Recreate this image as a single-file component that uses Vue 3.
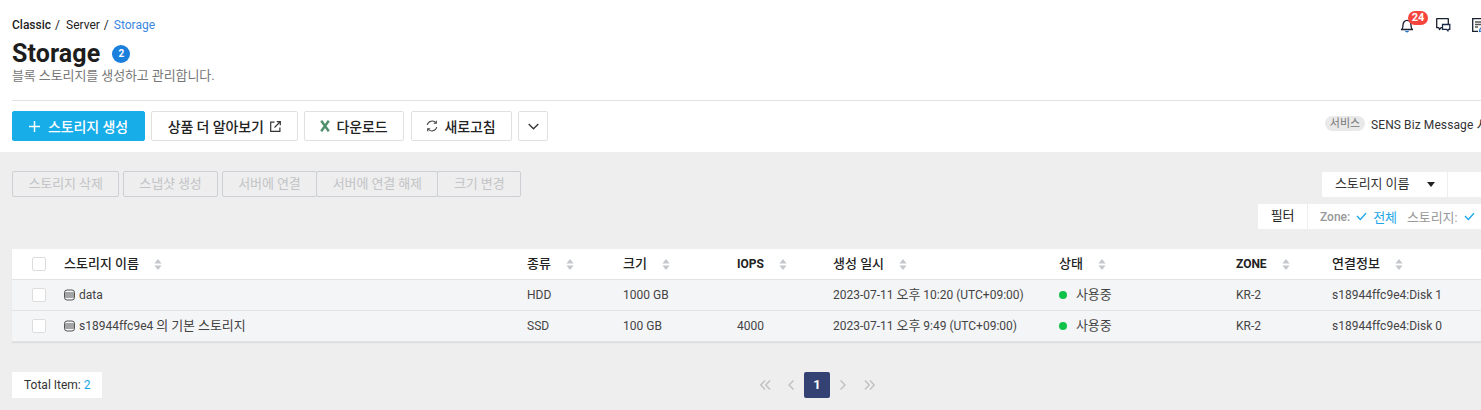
<script setup>
const headers = [
  { label: '스토리지 이름' }, { label: '종류' }, { label: '크기' }, { label: 'IOPS', latin: true },
  { label: '생성 일시' }, { label: '상태' }, { label: 'ZONE', latin: true }, { label: '연결정보' }
]
const rows = [
  { name: 'data', type: 'HDD', size: '1000 GB', iops: '', date: '2023-07-11 오후 10:20 (UTC+09:00)', zone: 'KR-2', link: 's18944ffc9e4:Disk 1' },
  { name: 's18944ffc9e4 의 기본 스토리지', type: 'SSD', size: '100 GB', iops: '4000', date: '2023-07-11 오후 9:49 (UTC+09:00)', zone: 'KR-2', link: 's18944ffc9e4:Disk 0' }
]
const actions = [
  { group: ['스토리지 삭제'] }, { group: ['스냅샷 생성'] }, { group: ['서버에 연결', '서버에 연결 해제', '크기 변경'] }
]
// Hangul is set a size larger than Latin in this UI, so mixed strings are split by script.
const split = (s) =>
  s.split(/([\uAC00-\uD7A3]+(?:\s[\uAC00-\uD7A3]+)*)/).filter(Boolean).map((t) => ({ t, ko: /[\uAC00-\uD7A3]/.test(t) }))
</script>

<template>
  <div class="page">
    <header class="top">
      <div class="crumb-row">
        <nav class="crumbs">
          <b>Classic</b><span class="sep">/</span><span>Server</span><span class="sep">/</span><span class="cur">Storage</span>
        </nav>
        <div class="top-icons">
          <span class="ic-bell">
            <svg width="16" height="16" viewBox="0 0 16 16" fill="none" stroke="#1a2230" stroke-width="1.3">
              <path d="M2.500 12.500c1.100-1 1.500-2 1.500-4.300C4 5.500 5.700 3.300 8 3.300s4 2.200 4 4.900c0 2.300.4 3.300 1.500 4.300z" stroke-linejoin="round"/>
              <path d="M6.500 13.800c.3.700.9 1 1.500 1s1.200-.3 1.500-1" stroke="#1a6fc4"/>
            </svg>
            <em class="count">24</em>
          </span>
          <svg class="ic-chat" width="16" height="16" viewBox="0 0 16 16" fill="none" stroke="#1a2230" stroke-width="1.3">
            <path d="M1.700 1.700h11.600v9H6l-1.500 1.800-.7-1.800H1.700z" stroke-linejoin="round"/>
            <path d="M7.500 7.500h7.300v4.800h-1.300l-.6 1.500-1.300-1.500h-4.100z" fill="#fff" stroke="#1a2a44"/>
          </svg>
          <svg class="ic-note" width="16" height="16" viewBox="0 0 16 16" fill="none" stroke="#1a2230" stroke-width="1.3">
            <path d="M14 7V1.700H1.700v12.600H7"/>
            <path d="M4 5h7.500M4 7.500h7M4 10h3" stroke="#555"/>
            <path d="M8.500 14.500l.5-2.500 4.500-4.500 2 2L11 14z" stroke="#1a6fc4" stroke-width="1.1"/>
          </svg>
        </div>
      </div>
      <h1 class="title">Storage <span class="badge">2</span></h1>
      <p class="sub ko">블록 스토리지를 생성하고 관리합니다.</p>
      <div class="toolbar">
        <button class="btn primary">
          <svg width="11" height="11" viewBox="0 0 11 11" stroke="#fff" stroke-width="1.500"><path d="M5.500 0v11M0 5.500h11"/></svg>
          <span>스토리지 생성</span>
        </button>
        <button class="btn w146">
          상품 더 알아보기
          <svg width="11" height="11" viewBox="0 0 11 11" fill="none" stroke="#333" stroke-width="1.200">
            <path d="M4.500 1.100H.7v9.200h9.200V6.500"/><path d="M4.500 6.500l5.800-5.800M6.800.7h3.500v3.500"/>
          </svg>
        </button>
        <button class="btn w100">
          <svg width="10" height="12" viewBox="0 0 10 12" fill="none" stroke="#4f8f6a" stroke-width="2.400"><path d="M1.200 .8l7.600 10.400M8.800 .8L1.200 11.200"/></svg>
          다운로드
        </button>
        <button class="btn w101">
          <svg width="12" height="12" viewBox="0 0 12 12" fill="none" stroke="#444" stroke-width="1.100">
            <path d="M1.200 5A5 5 0 0 1 10 3M10.800 7A5 5 0 0 1 2 9"/><path d="M10.300 .8V3.300H7.800M1.700 11.200V8.700h2.500"/>
          </svg>
          새로고침
        </button>
        <button class="btn w30">
          <svg width="11" height="7" viewBox="0 0 11 7" fill="none" stroke="#333" stroke-width="1.300"><path d="M.7 1l4.800 4.800L10.300 1"/></svg>
        </button>
        <div class="service"><span class="chip">서비스</span><span class="svc-text">SENS Biz Message <span class="ko">서비스 이용 안내</span></span></div>
      </div>
    </header>

    <main class="body">
      <div class="controls">
        <div class="actions">
          <div v-for="(a, i) in actions" :key="i" class="act-group">
            <span v-for="t in a.group" :key="t" class="act ko">{{ t }}</span>
          </div>
        </div>
        <div class="search">
          <div class="select ko">스토리지 이름<i class="tri"></i></div>
          <div class="search-input"></div>
        </div>
      </div>
      <div class="filters">
        <div class="f-label ko">필터</div>
        <div class="f-body">
          <span class="k">Zone:</span>
          <svg width="11" height="9" viewBox="0 0 11 9" fill="none" stroke="#1ba6e8" stroke-width="1.300"><path d="M1 4l3.300 3.500L10 1.200"/></svg>
          <span class="v ko">전체</span>
          <span class="k2"><span class="ko">스토리지</span>:</span>
          <svg width="11" height="9" viewBox="0 0 11 9" fill="none" stroke="#1ba6e8" stroke-width="1.300"><path d="M1 4l3.300 3.500L10 1.200"/></svg>
        </div>
      </div>

      <section class="table">
        <div class="tr th">
          <div class="c0"><i class="check"></i></div>
          <div v-for="h in headers" :key="h.label" class="cell" :class="h.latin ? 'latin' : 'ko'">
            {{ h.label }}
            <svg class="sort" width="8" height="11" viewBox="0 0 8 11" fill="#c4c7cb"><path d="M4 0l3.600 4.500H.4zM4 11L.4 6.500h7.200z"/></svg>
          </div>
        </div>
        <div v-for="r in rows" :key="r.name" class="tr td">
          <div class="c0"><i class="check"></i></div>
          <div class="cell name">
            <svg width="11" height="12" viewBox="0 0 11 12" fill="none" stroke="#555" stroke-width="1">
              <rect x=".5" y="1" width="10" height="10" rx="2.500"/><path d="M.5 4h10M.5 6h10M.5 8h10"/>
            </svg>
            <span class="mix"><span v-for="(p, i) in split(r.name)" :key="i" :class="{ ko: p.ko }">{{ p.t }}</span></span>
          </div>
          <div class="cell">{{ r.type }}</div>
          <div class="cell">{{ r.size }}</div>
          <div class="cell">{{ r.iops }}</div>
          <div class="cell"><span class="mix"><span v-for="(p, i) in split(r.date)" :key="i" :class="{ ko: p.ko }">{{ p.t }}</span></span></div>
          <div class="cell status"><i class="dot"></i><span class="ko">사용중</span></div>
          <div class="cell">{{ r.zone }}</div>
          <div class="cell">{{ r.link }}</div>
        </div>
      </section>

      <div class="foot">
        <div class="total">Total Item: <span>2</span></div>
        <div class="pager">
          <svg width="11" height="10" viewBox="0 0 11 10" fill="none" stroke="#c2c2c2" stroke-width="1.500"><path d="M5 .5L.8 5 5 9.500M10 .5L5.800 5 10 9.500"/></svg>
          <svg class="p-s" width="6" height="10" viewBox="0 0 6 10" fill="none" stroke="#c2c2c2" stroke-width="1.500"><path d="M5.500 .5L1 5l4.500 4.500"/></svg>
          <span class="p-cur">1</span>
          <svg class="p-n" width="6" height="10" viewBox="0 0 6 10" fill="none" stroke="#c2c2c2" stroke-width="1.500"><path d="M.5 .5L5 5 .5 9.500"/></svg>
          <svg class="p-l" width="11" height="10" viewBox="0 0 11 10" fill="none" stroke="#c2c2c2" stroke-width="1.500"><path d="M1 .5L5.200 5 1 9.500M6 .5L10.200 5 6 9.500"/></svg>
        </div>
      </div>
    </main>
  </div>
</template>

<style>
html, body { margin: 0; overflow: hidden; background: #fff; }
</style>

<style scoped>
.page {
  width: 1481px; height: 410px; overflow: hidden;
  font-family: Roboto, "Noto Sans CJK KR", sans-serif;
  font-size: 12px; color: #333; white-space: nowrap;
}
.ko { font-size: 13px; letter-spacing: -.1px; }
.top { height: 152px; box-sizing: border-box; padding: 17px 0 0 12px; background: #fff; }
.crumb-row { display: flex; height: 16px; align-items: center; }
.crumbs { display: flex; align-items: center; font-size: 12px; color: #222; line-height: 16px; }
.crumbs b { font-weight: 500; }
.sep { margin: 0 6px 0 4px; }
.cur { color: #3b87e0; margin-left: -1px; }
.top-icons { margin-left: auto; margin-right: -6px; display: flex; align-items: center; }
.ic-bell { position: relative; display: block; width: 16px; height: 16px; }
.count {
  position: absolute; left: 9px; top: -6px; height: 14px; min-width: 20px; border-radius: 7px;
  background: #f5453c; color: #fff; font: 700 11px/14px Roboto, sans-serif; text-align: center;
}
.ic-chat { margin-left: 20px; }
.ic-note { margin-left: 20px; }
.title { margin: 5px 0 0; height: 32px; font-size: 25px; font-weight: 700; line-height: 32px; color: #1d1d1d; display: flex; align-items: center; letter-spacing: .1px; }
.badge {
  margin-left: 12px; width: 18px; height: 18px; border-radius: 50%; background: #1b7fdc; color: #fff;
  font-size: 10px; font-weight: 700; line-height: 18px; text-align: center; letter-spacing: 0;
}
.sub { margin: -1px 0 1px; height: 16px; line-height: 14px; color: #777; }
.toolbar { margin-top: 15px; padding-top: 10px; border-top: 1px solid #e2e2e2; display: flex; align-items: center; gap: 6.500px; }
.toolbar > * { flex: none; }
.btn {
  box-sizing: border-box; height: 30px; display: flex; align-items: center; justify-content: center; gap: 6px;
  background: #fff; border: 1px solid #e0e0e0; border-radius: 2px; padding: 0; color: #222;
  font: 500 14px Roboto, "Noto Sans CJK KR", sans-serif; letter-spacing: -.1px;
}
.primary { width: 133px; margin-right: -.5px; background: #17ade9; border-color: #17ade9; color: #fff; gap: 8px; }
.w146 { width: 146.500px; }
.w100 { width: 100px; }
.w101 { width: 101px; }
.w30 { width: 30px; }
.service { margin-left: 770.500px; display: flex; align-items: center; color: #333; position: relative; top: -3px; }
.chip { width: 40px; height: 15px; border-radius: 8px; background: #e9e9e9; color: #777; font-size: 11px; line-height: 15px; text-align: center; margin-right: 6px; }
.svc-text { letter-spacing: .1px; }
.body { height: 258px; box-sizing: border-box; background: #eeeeee; padding: 19px 0 0 12px; }
.controls { display: flex; height: 26px; }
.actions { display: flex; gap: 4px; width: 508px; flex: none; }
.act-group { display: flex; }
.act {
  box-sizing: border-box; height: 26px; line-height: 24px; border: 1px solid #ccd0d5; color: #c2c4c7;
  padding: 0 15.500px; border-radius: 2px;
}
.act-group:nth-child(2) .act { padding: 0 15px; }
.act-group .act + .act { margin-left: -1px; }
.search { margin-left: 802px; display: flex; margin-top: 1px; flex: none; }
.select { box-sizing: border-box; width: 125px; height: 25px; background: #fff; line-height: 24px; padding-left: 13px; color: #333; border-radius: 2px 0 0 2px; position: relative; }
.tri { position: absolute; right: 12px; top: 10px; border: 4px solid transparent; border-top: 5px solid #222; border-bottom: 0; }
.search-input { width: 100px; height: 25px; background: #fff; margin-left: 1px; }
.filters { display: flex; margin: 7px 0 0 1246px; height: 25px; width: 400px; }
.f-label { width: 49px; background: #fff; text-align: center; line-height: 24px; color: #222; flex: none; }
.f-body { margin-left: 1px; width: 300px; flex: none; background: #fff; display: flex; align-items: center; padding-left: 12px; color: #999; font-weight: 500; }
.f-body svg { margin: 0 6px; flex: none; }
.f-body .v { color: #1ba6e8; font-weight: 400; }
.k2 { margin-left: 10px; font-weight: 400; letter-spacing: .2px; }
.table { margin-top: 20px; width: 1600px; box-shadow: 0 1px 1px #dcdcdc; }
.tr { display: grid; grid-template-columns: 52px 463px 96px 114px 96px 226px 177px 96px 280px; align-items: center; }
.th { height: 31px; background: #fff; border-bottom: 1px solid #e3e3e3; box-sizing: border-box; font-weight: 500; color: #222; }
.th .ko { letter-spacing: 0; }
.td { height: 31px; box-sizing: border-box; background: #f4f5f7; border-bottom: 1px solid #e3e3e3; color: #444; }
.c0 { padding-left: 20px; display: flex; align-items: center; }
.check { box-sizing: border-box; width: 14px; height: 14px; background: #fff; border: 1px solid #ddd; border-radius: 2px; display: block; }
.cell { display: flex; align-items: center; height: 16px; line-height: 16px; }
.latin { font-weight: 700; }
.sort { margin-left: 15px; flex: none; }
.name svg { margin-right: 4px; flex: none; }
.mix { white-space: pre; }
.dot { width: 8px; height: 8px; border-radius: 50%; background: #0fc24a; margin-right: 9px; display: block; }
.foot { display: flex; align-items: flex-start; margin-top: 30px; }
.total { width: 90px; height: 26px; box-sizing: border-box; padding-left: 12px; line-height: 26px; background: #fff; color: #333; }
.total span { color: #17a5e6; }
.pager { margin-left: 658px; height: 26px; display: flex; align-items: center; }
.p-s { margin-left: 17px; margin-right: 10px; }
.p-cur { width: 26px; height: 26px; background: #334272; color: #fff; font-weight: 700; font-size: 13px; line-height: 26px; text-align: center; border-radius: 2px; }
.p-n { margin-left: 10px; }
.p-l { margin-left: 18px; }
</style>
